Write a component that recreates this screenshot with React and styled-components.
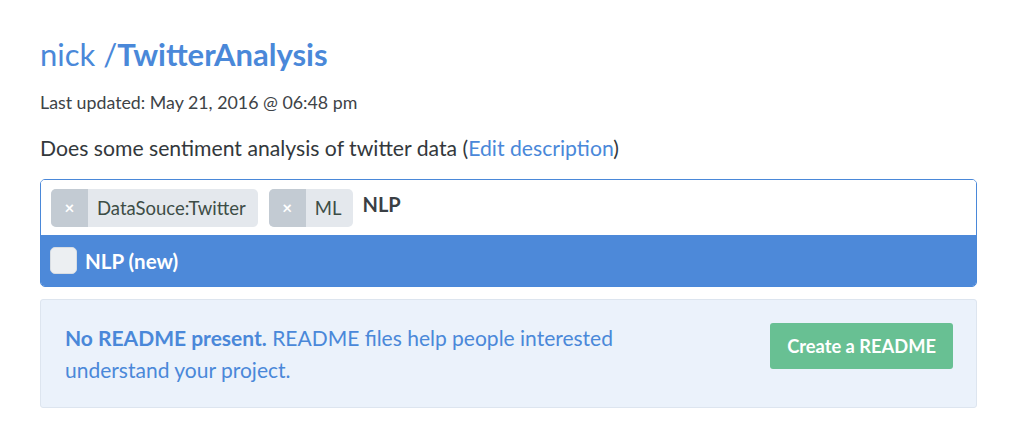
import React from "react";
import styled, { createGlobalStyle } from "styled-components";

const Global = createGlobalStyle`
  html, body { margin: 0; padding: 0; background: #ffffff; }
  body { font-family: Lato, "Open Sans", sans-serif; -webkit-font-smoothing: antialiased; }
`;

const Page = styled.div`
  width: 937px;
  padding: 36px 0 0 40px;
`;

const Title = styled.h1`
  margin: 0;
  font-size: 31px;
  font-weight: 400;
  line-height: 36px;
  color: #4a88d9;
`;

const Strong = styled.span`
  font-weight: 700;
`;

const Updated = styled.div`
  margin-top: 19px;
  font-size: 17.8px;
  line-height: 22px;
  color: #3e4347;
`;

const Description = styled.p`
  margin: 21px 0 0;
  font-size: 21.2px;
  line-height: 28px;
  color: #33383c;
`;

const Link = styled.a`
  color: #4a88d9;
  text-decoration: none;
`;

const Select = styled.div`
  margin-top: 17px;
  border: 1px solid #4a88d9;
  border-radius: 5px;
  overflow: hidden;
`;

const Control = styled.div`
  display: flex;
  align-items: center;
  gap: 11px;
  height: 55px;
  padding: 0 10px;
  background: #ffffff;
`;

const Tag = styled.div`
  display: flex;
  height: 38px;
  border-radius: 5px;
  overflow: hidden;
  background: #e4e8ed;
  font-size: 18.5px;
  color: #3d4d46;
`;

const TagRemove = styled.span`
  display: flex;
  align-items: center;
  justify-content: center;
  width: 37px;
  background: #c3cbd3;
  color: #ffffff;
  font-size: 17px;
  font-weight: 700;
`;

const TagLabel = styled.span`
  display: flex;
  align-items: center;
  padding: 0 12px 0 9px;
`;

const Query = styled.span`
  margin: -8px 0 0 -2px;
  font-size: 20px;
  font-weight: 700;
  color: #3a3f44;
`;

const Option = styled.div`
  display: flex;
  align-items: center;
  gap: 8px;
  height: 51px;
  padding: 0 9px;
  background: #4d89d9;
  color: #ffffff;
  font-size: 20.5px;
  font-weight: 700;
`;

const Check = styled.span`
  width: 27px;
  height: 27px;
  border-radius: 5px;
  background: #eceff2;
  border: 1px solid #d8dde3;
  box-sizing: border-box;
`;

const Notice = styled.div`
  display: flex;
  align-items: center;
  justify-content: space-between;
  margin-top: 12px;
  height: 109px;
  box-sizing: border-box;
  padding: 0 23px 0 24px;
  background: #ebf2fb;
  border: 1px solid #dde5ef;
  border-radius: 3px;
`;

const NoticeText = styled.p`
  margin: 0;
  width: 600px;
  font-size: 21px;
  line-height: 32px;
  color: #4a88d9;
`;

const Button = styled.button`
  align-self: flex-start;
  margin-top: 23px;
  height: 46px;
  padding: 0 17px;
  border: none;
  border-radius: 3px;
  background: #68c093;
  color: #ffffff;
  font-family: Lato, sans-serif;
  font-size: 18.3px;
  font-weight: 700;
`;

export default function App() {
  return (
    <>
      <Global />
      <Page>
        <Title>
          nick /<Strong>TwitterAnalysis</Strong>
        </Title>
        <Updated>Last updated: May 21, 2016 @ 06:48 pm</Updated>
        <Description>
          Does some sentiment analysis of twitter data (<Link href="#">Edit description</Link>)
        </Description>
        <Select>
          <Control>
            <Tag>
              <TagRemove>×</TagRemove>
              <TagLabel>DataSouce:Twitter</TagLabel>
            </Tag>
            <Tag>
              <TagRemove>×</TagRemove>
              <TagLabel>ML</TagLabel>
            </Tag>
            <Query>NLP</Query>
          </Control>
          <Option>
            <Check />
            NLP (new)
          </Option>
        </Select>
        <Notice>
          <NoticeText>
            <Strong>No README present.</Strong> README files help people interested understand your project.
          </NoticeText>
          <Button>Create a README</Button>
        </Notice>
      </Page>
    </>
  );
}
